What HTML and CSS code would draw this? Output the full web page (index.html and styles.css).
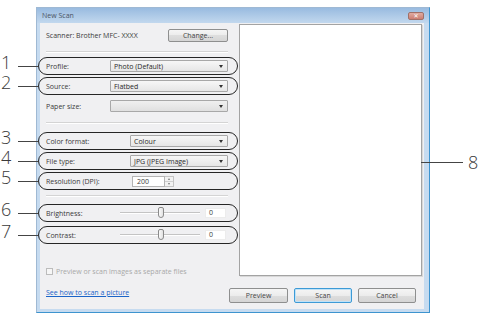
FILE: index.html
```html
<!DOCTYPE html>
<html>
<head>
<meta charset="utf-8">
<title>New Scan</title>
<link rel="stylesheet" href="styles.css">
</head>
<body>
<div class="page">
  <div class="window">
    <div class="titlebar">
      <span class="title">New Scan</span>
      <span class="close">&#x2715;</span>
    </div>
    <div class="client">
      <div class="main">
        <div class="settings">
          <div class="scanner-row">
            <span>Scanner: Brother MFC- XXXX</span>
            <button class="btn change">Change...</button>
          </div>
          <div class="sep first"></div>

          <div class="row oval r-first">
            <span class="num">1</span><span class="leader"></span>
            <span class="lbl w64">Profile:</span>
            <div class="combo"><span>Photo (Default)</span><span class="arrow"></span></div>
          </div>
          <div class="row oval">
            <span class="num">2</span><span class="leader"></span>
            <span class="lbl w64">Source:</span>
            <div class="combo"><span>Flatbed</span><span class="arrow"></span></div>
          </div>
          <div class="row">
            <span class="lbl w64">Paper size:</span>
            <div class="combo empty"><span></span><span class="arrow"></span></div>
          </div>

          <div class="sep s2"></div>

          <div class="row oval r-c">
            <span class="num">3</span><span class="leader"></span>
            <span class="lbl w84">Color format:</span>
            <div class="combo"><span>Colour</span><span class="arrow"></span></div>
          </div>
          <div class="row oval">
            <span class="num">4</span><span class="leader"></span>
            <span class="lbl w84">File type:</span>
            <div class="combo"><span>JPG (JPEG Image)</span><span class="arrow"></span></div>
          </div>
          <div class="row oval">
            <span class="num">5</span><span class="leader"></span>
            <span class="lbl w86">Resolution (DPI):</span>
            <div class="spin">
              <div class="spin-box">200</div>
              <div class="spin-btns"><span class="up"></span><span class="down"></span></div>
            </div>
          </div>

          <div class="sep s3"></div>

          <div class="row oval r-b">
            <span class="num">6</span><span class="leader"></span>
            <span class="lbl w74">Brightness:</span>
            <div class="slider"><span class="thumb"></span></div>
            <div class="val">0</div>
          </div>
          <div class="row oval r-ct">
            <span class="num">7</span><span class="leader"></span>
            <span class="lbl w74">Contrast:</span>
            <div class="slider"><span class="thumb"></span></div>
            <div class="val">0</div>
          </div>

          <div class="check-row">
            <span class="cb"></span>
            <span>Preview or scan images as separate files</span>
          </div>
        </div>

        <div class="preview">
          <span class="leader8"></span>
          <span class="num8">8</span>
        </div>
      </div>

      <div class="bottom">
        <a class="link" href="#">See how to scan a picture</a>
        <div class="actions">
          <button class="btn act w59">Preview</button>
          <button class="btn act scan">Scan</button>
          <button class="btn act">Cancel</button>
        </div>
      </div>
    </div>
  </div>
</div>
</body>
</html>
```

FILE: styles.css
```css
body {
  margin: 0;
  background: #fff;
  font-family: "Open Sans", "DejaVu Sans", sans-serif;
  font-size: 7px;
  color: #3a3a3a;
}

.page {
  padding: 7px 0 0 36px;
}

.window {
  width: 394px;
  height: 306px;
  box-sizing: border-box;
  border: 1px solid #9fb9d4;
  border-right-color: #3d94cf;
  border-bottom-color: #3d94cf;
  background: #c6dbf0;
  display: flex;
  flex-direction: column;
  padding: 0 5px 3px 3px;
}

.titlebar {
  height: 15px;
  margin: 0 -5px 0 -3px;
  padding: 0 5px 0 5px;
  display: flex;
  align-items: center;
  justify-content: space-between;
  background: linear-gradient(#99bbe0, #c2d8ee);
}

.title {
  color: #4a5566;
}

.close {
  width: 16px;
  height: 8px;
  box-sizing: border-box;
  border: 1px solid #a07068;
  border-radius: 2px;
  background: linear-gradient(#e0aca2, #cc7e72);
  color: #fff;
  font-size: 6px;
  line-height: 6px;
  text-align: center;
}

.client {
  flex: 1;
  display: flex;
  flex-direction: column;
  background: #f0f0f2;
}

.main {
  display: flex;
  height: 258px;
}

.settings {
  width: 199px;
  box-sizing: border-box;
  padding: 6px 11px 0 6px;
  display: flex;
  flex-direction: column;
}

.scanner-row {
  height: 13px;
  display: flex;
  align-items: center;
  justify-content: space-between;
}

.btn {
  font: inherit;
  font-size: 7px;
  color: #444;
  height: 13px;
  padding: 0;
  box-sizing: border-box;
  border: 1px solid #8e8f8f;
  border-radius: 2px;
  background: linear-gradient(#f5f5f5 0, #ececec 50%, #dedede 50%, #d5d5d5 100%);
}

.change {
  width: 60px;
}

.sep {
  border-top: 1px solid #d4d4d4;
  border-bottom: 1px solid #fff;
}
.sep.first { margin-top: 9px; }
.sep.s2 { margin-top: 7px; }
.sep.s3 { margin-top: 5px; }

.row {
  position: relative;
  height: 18px;
  box-sizing: border-box;
  margin: 2px -10px 0 -8px;
  padding: 0 9px 0 7px;
  border: 1px solid transparent;
  display: flex;
  align-items: center;
}
.row.oval {
  border-color: #262626;
  border-radius: 9px;
}
.row.r-first { margin-top: 4px; }
.row.r-c { margin-top: 8px; }
.row.r-b { margin-top: 7px; }
.row.r-ct { margin-top: 4px; }

.lbl { flex: none; }
.w64 { width: 64px; }
.w74 { width: 74px; }
.w84 { width: 84px; }
.w86 { width: 86px; }

.num {
  position: absolute;
  left: -38px;
  top: -3px;
  width: 10px;
  text-align: center;
  font-size: 18px;
  font-weight: 300;
  line-height: 14px;
  color: #3a3a3a;
}
.leader {
  position: absolute;
  left: -21px;
  top: 8px;
  width: 20px;
  height: 1px;
  background: #444;
}

.combo {
  flex: 1;
  height: 12px;
  box-sizing: border-box;
  border: 1px solid #a8a8a8;
  border-radius: 1px;
  background: linear-gradient(#f7f7f7, #e6e6e6);
  display: flex;
  align-items: center;
  justify-content: space-between;
  padding: 0 4px 0 3px;
  color: #2a2a2a;
}
.combo.empty {
  background: linear-gradient(#f0f0f0, #e0e0e0);
}
.arrow {
  width: 0;
  height: 0;
  border-left: 2.5px solid transparent;
  border-right: 2.5px solid transparent;
  border-top: 3px solid #333;
}

.spin {
  display: flex;
  height: 11px;
}
.spin-box {
  width: 33px;
  box-sizing: border-box;
  background: #fff;
  border: 1px solid #b5b5b5;
  padding-left: 4px;
  line-height: 9px;
}
.spin-btns {
  width: 9px;
  display: flex;
  flex-direction: column;
  border: 1px solid #c4c4c4;
  border-left: none;
  box-sizing: border-box;
  background: #f2f2f2;
}
.spin-btns span {
  flex: 1;
  display: flex;
  align-items: center;
  justify-content: center;
}
.spin-btns .up { border-bottom: 1px solid #d0d0d0; }
.spin-btns .up::after {
  content: "";
  border-left: 1.5px solid transparent;
  border-right: 1.5px solid transparent;
  border-bottom: 2px solid #777;
}
.spin-btns .down::after {
  content: "";
  border-left: 1.5px solid transparent;
  border-right: 1.5px solid transparent;
  border-top: 2px solid #777;
}

.slider {
  position: relative;
  width: 80px;
  height: 12px;
  background: linear-gradient(transparent 5px, #c4c4c4 5px, #c4c4c4 6px, #fff 6px, #fff 7px, transparent 7px);
}
.thumb {
  position: absolute;
  left: 38px;
  top: 0;
  width: 6px;
  height: 11px;
  box-sizing: border-box;
  border: 1px solid #8a8a8a;
  border-radius: 2px 2px 3px 3px;
  background: linear-gradient(90deg, #fafafa, #e2e2e2);
}
.val {
  margin-left: 5px;
  width: 21px;
  height: 10px;
  box-sizing: border-box;
  background: #fff;
  border: 1px solid #ececec;
  padding-left: 3px;
  line-height: 8px;
}

.check-row {
  margin-top: 22px;
  height: 10px;
  display: flex;
  align-items: center;
  color: #a8a8a8;
}
.cb {
  width: 7px;
  height: 7px;
  box-sizing: border-box;
  border: 1px solid #bcbcbc;
  background: #f6f6f6;
  margin-right: 3px;
}

.preview {
  position: relative;
  width: 183px;
  height: 252px;
  margin-top: 1px;
  box-sizing: border-box;
  border: 1px solid #a3a3a3;
  background: #fff;
  box-shadow: 1px 1px 0 #d8d8d8;
}
.leader8 {
  position: absolute;
  left: 181px;
  top: 137px;
  width: 42px;
  height: 1px;
  background: #444;
}
.num8 {
  position: absolute;
  left: 228px;
  top: 130px;
  width: 9px;
  text-align: center;
  font-size: 18px;
  font-weight: 300;
  line-height: 14px;
  color: #3a3a3a;
}

.bottom {
  flex: 1;
  display: flex;
  align-items: center;
  justify-content: space-between;
  padding: 0 8px 0 6px;
}
.link {
  color: #1a64c8;
  text-decoration: underline;
  margin-bottom: 5px;
}
.actions {
  display: flex;
  gap: 6px;
}
.btn.act {
  width: 58px;
  height: 15px;
}
.btn.act.w59 { width: 59px; }
.btn.scan {
  border-color: #3c9ad6;
  box-shadow: inset 0 0 0 1px #bfe2f8;
}
```
